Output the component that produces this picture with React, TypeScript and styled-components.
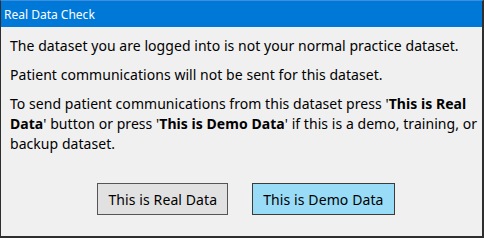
import React from "react";
import styled, { createGlobalStyle } from "styled-components";

const GlobalStyle = createGlobalStyle`
  html, body {
    margin: 0;
    padding: 0;
    background: #ffffff;
  }
  body {
    font-family: "Noto Sans", "Liberation Sans", sans-serif;
  }
`;

const Window = styled.div`
  box-sizing: border-box;
  width: 484px;
  height: 238px;
  display: flex;
  flex-direction: column;
  background: #f0f0f0;
  border: 1px solid #2e2e2e;
  border-right-width: 2px;
  border-bottom-width: 2px;
  border-top-color: #3d8fde;
`;

const TitleBar = styled.div`
  height: 26px;
  flex-shrink: 0;
  display: flex;
  align-items: center;
  padding-left: 3px;
  background: #0078d7;
  color: #ffffff;
  font-size: 12px;
`;

const Body = styled.div`
  flex: 1;
  display: flex;
  flex-direction: column;
  padding: 9px 4px 0 9px;
  color: #000000;
`;

const Message = styled.p`
  margin: 0 0 9px 0;
  font-size: 14px;
  line-height: 20px;
  letter-spacing: 0.05px;
  b {
    font-weight: 700;
  }
`;

const ButtonRow = styled.div`
  display: flex;
  justify-content: center;
  gap: 24px;
  margin-top: 20px;
  padding-left: 4px;
`;

const DialogButton = styled.button<{ $primary?: boolean }>`
  height: 32px;
  padding: 0 10px;
  font-family: inherit;
  font-size: 14px;
  letter-spacing: 0.1px;
  color: #000000;
  background: ${(p) => (p.$primary ? "#99dcf7" : "#e1e1e1")};
  border: 1px solid ${(p) => (p.$primary ? "#3c3c3c" : "#555555")};
  border-radius: 0;
`;

export default function App() {
  return (
    <>
      <GlobalStyle />
      <Window>
        <TitleBar>Real Data Check</TitleBar>
        <Body>
          <Message>The dataset you are logged into is not your normal practice dataset.</Message>
          <Message>Patient communications will not be sent for this dataset.</Message>
          <Message>
            To send patient communications from this dataset press '<b>This is Real Data</b>' button or
            press '<b>This is Demo Data</b>' if this is a demo, training, or backup dataset.
          </Message>
          <ButtonRow>
            <DialogButton>This is Real Data</DialogButton>
            <DialogButton $primary>This is Demo Data</DialogButton>
          </ButtonRow>
        </Body>
      </Window>
    </>
  );
}
